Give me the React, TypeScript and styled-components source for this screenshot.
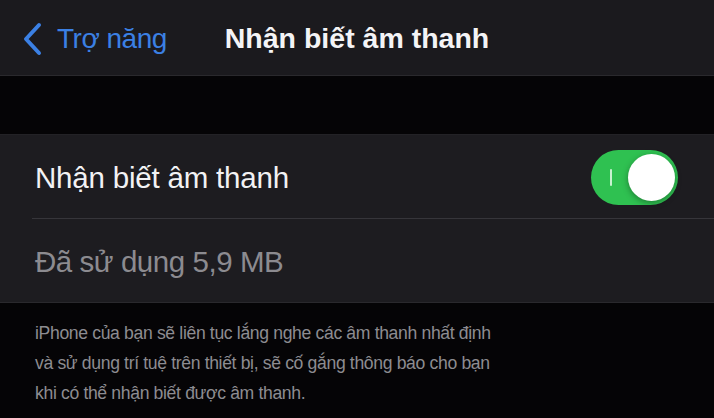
import React from "react";
import styled, { createGlobalStyle } from "styled-components";

const Global = createGlobalStyle`
  html, body { margin: 0; padding: 0; background: #050406; }
  body { width: 714px; height: 418px; overflow: hidden; font-family: "Liberation Sans", Arial, sans-serif; -webkit-font-smoothing: antialiased; }
`;

const Screen = styled.div`
  width: 714px;
  height: 418px;
  display: flex;
  flex-direction: column;
  background: #050406;
`;

const NavBar = styled.header`
  height: 75px;
  flex: none;
  display: grid;
  grid-template-columns: 1fr auto 1fr;
  align-items: center;
  background: #1b1a1e;
  border-bottom: 1px solid #2a292d;
`;

const BackButton = styled.div`
  display: flex;
  align-items: center;
  gap: 14px;
  padding-left: 21px;
  color: #3b80e4;
  font-size: 28px;
  letter-spacing: -0.5px;
  margin-top: 2px;
`;

const Title = styled.h1`
  margin: 0;
  margin-top: 2px;
  color: #f4f4f6;
  font-size: 28.5px;
  font-weight: 700;
  letter-spacing: 0;
`;

const Spacer = styled.div`
  height: 58px;
  flex: none;
  border-bottom: 1px solid #232226;
`;

const Group = styled.section`
  background: #1d1c20;
  flex: none;
`;

const Row = styled.div<{ $divider?: boolean }>`
  height: 83px;
  display: flex;
  align-items: center;
  justify-content: space-between;
  padding: 0 36px 0 35px;
  position: relative;
  ${(p) =>
    p.$divider &&
    `&::after {
      content: "";
      position: absolute;
      left: 32px;
      right: 0;
      bottom: -1px;
      height: 1px;
      background: #36353a;
    }`}
  & + & {
    margin-top: 1px;
  }
`;

const Label = styled.span<{ $muted?: boolean }>`
  font-size: 29.5px;
  letter-spacing: ${(p) => (p.$muted ? "-0.45px" : "-0.2px")};
  margin-top: 3px;
  color: ${(p) => (p.$muted ? "#8c8b90" : "#f2f2f4")};
`;

const Toggle = styled.div`
  width: 87px;
  height: 55px;
  border-radius: 28px;
  background: #2fc151;
  position: relative;
  flex: none;
  margin-top: 2px;
`;

const ToggleMark = styled.span`
  position: absolute;
  left: 19px;
  top: 19px;
  width: 2px;
  height: 17px;
  background: #c8f2d0;
  border-radius: 1px;
`;

const Knob = styled.span`
  position: absolute;
  right: 3px;
  top: 4px;
  width: 47px;
  height: 47px;
  border-radius: 50%;
  background: #ffffff;
  box-shadow: 0 2px 6px rgba(0, 0, 0, 0.35);
`;

const Footer = styled.p`
  margin: 0;
  padding: 15px 20px 0 35px;
  color: #8d8c91;
  font-size: 17.6px;
  line-height: 30px;
  letter-spacing: -0.35px;
  border-top: 1px solid #2a292d;
  white-space: nowrap;
`;

const Chevron = () => (
  <svg width="22" height="34" viewBox="0 0 22 34" fill="none">
    <path d="M18 3 L5 17 L18 31" stroke="#3b80e4" strokeWidth="4" strokeLinecap="round" strokeLinejoin="round" />
  </svg>
);

export default function App() {
  return (
    <Screen>
      <Global />
      <NavBar>
        <BackButton>
          <Chevron />
          <span>Trợ năng</span>
        </BackButton>
        <Title>Nhận biết âm thanh</Title>
        <div />
      </NavBar>
      <Spacer />
      <Group>
        <Row $divider>
          <Label>Nhận biết âm thanh</Label>
          <Toggle>
            <ToggleMark />
            <Knob />
          </Toggle>
        </Row>
        <Row>
          <Label $muted>Đã sử dụng 5,9 MB</Label>
        </Row>
      </Group>
      <Footer>
        iPhone của bạn sẽ liên tục lắng nghe các âm thanh nhất định
        <br />
        và sử dụng trí tuệ trên thiết bị, sẽ cố gắng thông báo cho bạn
        <br />
        khi có thể nhận biết được âm thanh.
      </Footer>
    </Screen>
  );
}
